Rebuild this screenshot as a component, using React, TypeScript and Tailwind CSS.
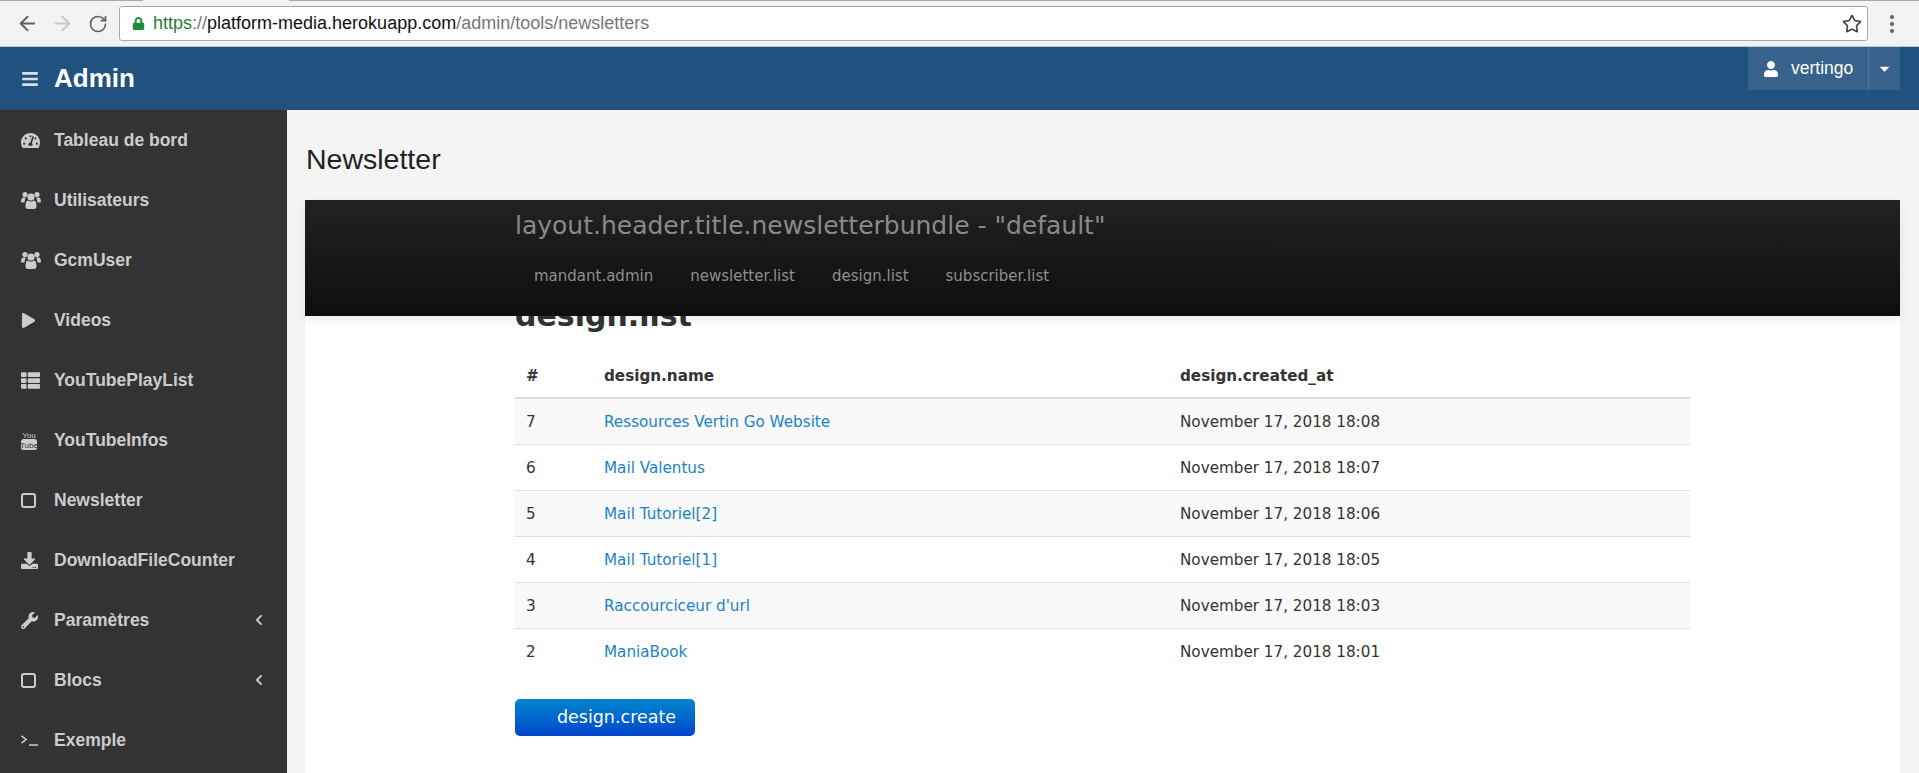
import { ArrowLeft, ArrowRight, RotateCw, Star } from "lucide-react";
import {
  FaBars,
  FaCaretDown,
  FaChevronLeft,
  FaDownload,
  FaLock,
  FaPlay,
  FaTachometerAlt,
  FaThList,
  FaUser,
  FaWrench,
} from "react-icons/fa";
import type { ReactNode } from "react";

const UsersIcon = () => (
  <svg viewBox="0 0 20 18" className="h-[18px] w-[20px]" fill="currentColor">
    <circle cx="4" cy="3.500" r="2.600" />
    <circle cx="16" cy="3.500" r="2.600" />
    <path d="M0 11c0-3 1-4.500 2.500-4.500h2.300C4 8 3.700 9.500 3.600 11.500H1c-.6 0-1-.2-1-.5zM20 11c0-3-1-4.500-2.500-4.500h-2.300c.8 1.500 1.100 3 1.200 5H19c.6 0 1-.2 1-.5z" />
    <circle cx="10" cy="6" r="3.600" />
    <path d="M4.500 15.500c0-4 1-6 2.500-6 .8.700 1.800 1 3 1s2.200-.3 3-1c1.500 0 2.500 2 2.500 6 0 1.500-1 2.500-2.500 2.500H7c-1.500 0-2.500-1-2.500-2.500z" />
  </svg>
);

const YoutubeIcon = () => (
  <svg viewBox="0 0 16 19" className="h-[19px] w-[16px]">
    <text x="8" y="7" textAnchor="middle" fontSize="8" fontFamily="Liberation Sans Narrow, Liberation Sans, sans-serif" fill="currentColor">
      You
    </text>
    <rect x="0" y="8" width="16" height="11" rx="2.500" fill="currentColor" />
    <text x="8" y="16.500" textAnchor="middle" fontSize="8" fontFamily="Liberation Sans Narrow, Liberation Sans, sans-serif" fill="#333333">
      Tube
    </text>
  </svg>
);

const SquareIcon = () => <span className="size-[15px] rounded-[3px] border-2 border-[#cccccc]" />;

const TerminalIcon = () => (
  <svg viewBox="0 0 17 11" className="h-[11px] w-[17px]" fill="none" stroke="currentColor" strokeWidth="1.500">
    <path d="M.5.800 5 4.500.5 8.200M8 10h9" />
  </svg>
);

const menu: { label: string; icon: ReactNode; caret?: boolean }[] = [
  { label: "Tableau de bord", icon: <FaTachometerAlt size={19} /> },
  { label: "Utilisateurs", icon: <UsersIcon /> },
  { label: "GcmUser", icon: <UsersIcon /> },
  { label: "Videos", icon: <FaPlay size={15} /> },
  { label: "YouTubePlayList", icon: <FaThList size={19} /> },
  { label: "YouTubeInfos", icon: <YoutubeIcon /> },
  { label: "Newsletter", icon: <SquareIcon /> },
  { label: "DownloadFileCounter", icon: <FaDownload size={17} /> },
  { label: "Paramètres", icon: <FaWrench size={17} />, caret: true },
  { label: "Blocs", icon: <SquareIcon />, caret: true },
  { label: "Exemple", icon: <TerminalIcon /> },
];

const rows = [
  { id: 7, name: "Ressources Vertin Go Website", date: "November 17, 2018 18:08" },
  { id: 6, name: "Mail Valentus", date: "November 17, 2018 18:07" },
  { id: 5, name: "Mail Tutoriel[2]", date: "November 17, 2018 18:06" },
  { id: 4, name: "Mail Tutoriel[1]", date: "November 17, 2018 18:05" },
  { id: 3, name: "Raccourciceur d'url", date: "November 17, 2018 18:03" },
  { id: 2, name: "ManiaBook", date: "November 17, 2018 18:01" },
];

const bundleLinks = ["mandant.admin", "newsletter.list", "design.list", "subscriber.list"];

export default function App() {
  return (
    <div className="flex h-[773px] w-[1919px] flex-col overflow-hidden bg-[#f4f4f4] font-['Liberation_Sans',sans-serif]">
      <div className="flex h-[1px] shrink-0">
        <div className="w-[143px] bg-[#a8a8a8]" />
        <div className="w-[146px] bg-[#f2f2f2]" />
        <div className="flex-1 bg-[#a8a8a8]" />
      </div>
      <div className="flex h-[46px] shrink-0 items-center border-b border-[#c4c4c4] bg-[#f2f2f2]">
        <div className="flex w-[119px] items-center pl-[10px]">
          <span className="flex w-[35px] justify-center">
            <ArrowLeft size={23} className="text-[#5f6368]" />
          </span>
          <span className="flex w-[35px] justify-center">
            <ArrowRight size={23} className="text-[#c8c8c8]" />
          </span>
          <span className="flex w-[35px] justify-center">
            <RotateCw size={20} className="text-[#5f6368]" />
          </span>
        </div>
        <div className="flex h-[35px] w-[1749px] items-center rounded-[3px] border border-[#a9a9a9] bg-white pr-[5px] pl-[12px] text-[18px]">
          <FaLock size={13} className="mr-[8px] text-[#1e8e3e]" />
          <span className="text-[#1e7e34]">https</span>
          <span className="text-[#777]">://</span>
          <span className="text-[#111]">platform-media.herokuapp.com</span>
          <span className="text-[#777]">/admin/tools/newsletters</span>
          <Star size={20} className="ml-auto text-[#444]" />
        </div>
        <div className="ml-[22px] flex flex-col gap-[3px]">
          <span className="size-[4px] rounded-full bg-[#5f6368]" />
          <span className="size-[4px] rounded-full bg-[#5f6368]" />
          <span className="size-[4px] rounded-full bg-[#5f6368]" />
        </div>
      </div>

      <header className="flex h-[63px] shrink-0 items-start justify-between bg-[#20517f] pr-[19px]">
        <div className="flex h-[63px] items-center gap-[15px] pl-[21px] text-white">
          <FaBars size={18} className="text-[#d5dfe9]" />
          <span className="text-[26px] font-bold">Admin</span>
        </div>
        <div className="flex h-[43px] bg-[#38628c] text-white">
          <div className="flex w-[120px] items-center gap-[12px] pl-[15px] text-[17.5px]">
            <FaUser size={16} />
            <span>vertingo</span>
          </div>
          <div className="flex w-[32px] items-center justify-center border-l border-[#4d7299]">
            <FaCaretDown size={15} />
          </div>
        </div>
      </header>

      <div className="flex min-h-0 flex-1">
        <aside className="w-[287px] shrink-0 bg-[#333333]">
          {menu.map((item) => (
            <div key={item.label} className="flex h-[60px] items-center pr-[22px] pl-[21px] text-[#cccccc]">
              <span className="flex w-[33px] shrink-0 items-center">{item.icon}</span>
              <span className="text-[17.5px] font-bold">{item.label}</span>
              {item.caret && <FaChevronLeft size={12} className="ml-auto" />}
            </div>
          ))}
        </aside>

        <main className="min-w-0 flex-1 pr-[19px] pl-[19px]">
          <h1 className="pt-[31px] text-[28.500px] leading-[36px] text-[#222]">Newsletter</h1>
          <div className="mt-[23px] ml-[-1px] h-[700px] bg-white font-['DejaVu_Sans',sans-serif]">
            <div className="relative z-10 h-[116px] bg-gradient-to-b from-[#222222] to-[#0e0e0e] pl-[210px] shadow-[0_4px_12px_rgba(0,0,0,0.08)]">
              <div className="pt-[10px] text-[25px] leading-[32px] text-[#8a8a8a]">
                layout.header.title.newsletterbundle - "default"
              </div>
              <nav className="mt-[24px] flex gap-[37px] pl-[19px] text-[15px] leading-[20px] text-[#8f8f8f]">
                {bundleLinks.map((link) => (
                  <span key={link}>{link}</span>
                ))}
              </nav>
            </div>
            <div className="w-[1385px] pl-[210px]">
              <h2 className="mt-[-22px] text-[30px] leading-[44px] font-bold text-[#333]">design.list</h2>
              <table className="mt-[14px] w-full border-collapse text-[15.200px] text-[#333]">
                <thead>
                  <tr className="h-[46px] border-b-2 border-[#dddddd] text-left">
                    <th className="w-[89px] pt-[3px] pl-[11px]">#</th>
                    <th className="w-[576px] pt-[3px] pl-0">design.name</th>
                    <th className="pt-[3px]">design.created_at</th>
                  </tr>
                </thead>
                <tbody>
                  {rows.map((row, i) => (
                    <tr key={row.id} className={`h-[46px] border-b border-[#dddddd] last:border-b-0 ${i % 2 === 0 ? "bg-[#f9f9f9]" : ""}`}>
                      <td className="pt-[2px] pl-[11px]">{row.id}</td>
                      <td className="pt-[2px] text-[#1c82c8]">{row.name}</td>
                      <td className="pt-[2px]">{row.date}</td>
                    </tr>
                  ))}
                </tbody>
              </table>
              <button className="mt-[25px] h-[37px] w-[180px] rounded-[5px] bg-gradient-to-b from-[#0085cc] to-[#0044cc] pl-[23px] text-[17.500px] text-white">
                design.create
              </button>
            </div>
          </div>
        </main>
      </div>
    </div>
  );
}
